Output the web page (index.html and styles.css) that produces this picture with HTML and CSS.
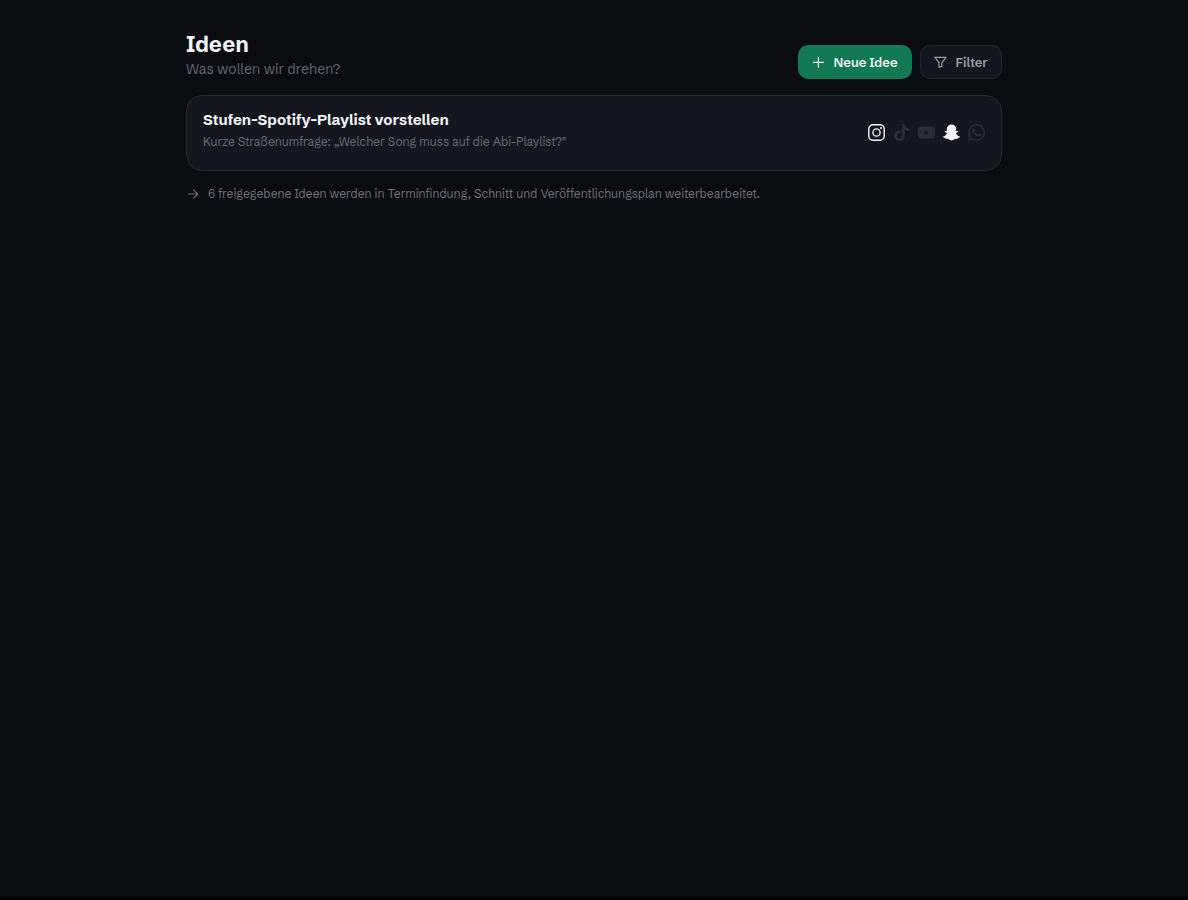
FILE: index.html
```html
<!DOCTYPE html>
<html lang="de">
<head>
  <meta charset="UTF-8" />
  <meta name="viewport" content="width=device-width, initial-scale=1" />
  <title>Ideen</title>
  <link rel="stylesheet" href="styles.css">
</head>
<body>
  <main class="page">
    <header class="page-header">
      <div>
        <h1>Ideen</h1>
        <p class="subtitle">Was wollen wir drehen?</p>
      </div>
      <div class="actions">
        <button type="button" class="btn btn-primary">
          <svg class="icon" viewBox="0 0 24 24" aria-hidden="true"><path d="M11 4v17M2.500 12.500h17" /></svg>
          Neue Idee
        </button>
        <button type="button" class="btn btn-filter">
          <svg class="icon" viewBox="0 0 24 24" aria-hidden="true"><path d="M1.500 4h19l-7 9v6.500l-5 1.500v-8z" /></svg>
          Filter
        </button>
      </div>
    </header>

    <article class="card">
      <div class="card-text">
        <h2>Stufen-Spotify-Playlist vorstellen</h2>
        <p>Kurze Straßenumfrage: „Welcher Song muss auf die Abi-Playlist?"</p>
      </div>
      <div class="channels">
        <svg class="channel channel-line active" viewBox="0 0 24 24" role="img" aria-label="Instagram">
          <rect x="1.100" y="1.100" width="21.800" height="21.800" rx="6" />
          <circle cx="12" cy="12" r="5.100" />
          <circle class="dot" cx="18.400" cy="5.600" r="1.440" />
        </svg>
        <svg class="channel" viewBox="0 0 24 24" role="img" aria-label="TikTok">
          <path d="M12.525.02c1.31-.02 2.61-.01 3.91-.02.08 1.53.63 3.09 1.75 4.17 1.12 1.11 2.7 1.62 4.24 1.79v4.03c-1.44-.05-2.89-.35-4.2-.97-.57-.26-1.1-.59-1.62-.93-.01 2.92.01 5.84-.02 8.75-.08 1.4-.54 2.79-1.35 3.94-1.31 1.92-3.58 3.17-5.91 3.21-1.43.08-2.86-.31-4.08-1.03-2.02-1.19-3.44-3.37-3.65-5.71-.02-.5-.03-1-.01-1.49.18-1.9 1.12-3.72 2.58-4.96 1.66-1.44 3.98-2.13 6.15-1.72.02 1.48-.04 2.96-.04 4.44-.99-.32-2.15-.23-3.02.37-.63.41-1.11 1.04-1.36 1.75-.21.51-.15 1.07-.14 1.61.24 1.64 1.82 3.02 3.5 2.87 1.12-.01 2.19-.66 2.77-1.61.19-.33.4-.67.41-1.06.1-1.79.06-3.57.07-5.36.01-4.03-.01-8.05.02-12.07z" />
        </svg>
        <svg class="channel" viewBox="0 0 24 24" role="img" aria-label="YouTube">
          <path d="M23.498 6.186a3.016 3.016 0 0 0-2.122-2.136C19.505 3.545 12 3.545 12 3.545s-7.505 0-9.377.505A3.017 3.017 0 0 0 .502 6.186C0 8.070 0 12 0 12s0 3.930.502 5.814a3.016 3.016 0 0 0 2.122 2.136c1.871.505 9.376.505 9.376.505s7.505 0 9.377-.505a3.015 3.015 0 0 0 2.122-2.136C24 15.930 24 12 24 12s0-3.930-.502-5.814zM9.545 15.568V8.432L15.818 12l-6.273 3.568z" />
        </svg>
        <svg class="channel active" viewBox="0 0 24 24" role="img" aria-label="Snapchat">
          <path d="M12.206.793c.99 0 4.347.276 5.93 3.821.529 1.193.403 3.219.299 4.847l-.003.06c-.012.18-.022.345-.03.51.075.045.203.09.401.09.3-.016.659-.12 1.033-.301.165-.088.344-.104.464-.104.182 0 .359.029.509.09.45.149.734.479.734.838.015.449-.39.839-1.213 1.168-.089.029-.209.075-.344.119-.45.135-1.139.36-1.333.81-.09.224-.061.524.12.868l.015.015c.06.136 1.526 3.475 4.791 4.014.255.044.435.27.42.509 0 .075-.015.149-.045.225-.24.569-1.273.988-3.146 1.271-.059.091-.12.375-.164.57-.029.179-.074.36-.134.553-.076.271-.27.405-.555.405h-.03c-.135 0-.313-.031-.538-.074-.36-.075-.765-.135-1.273-.135-.3 0-.599.015-.913.074-.6.104-1.123.464-1.723.884-.853.599-1.826 1.288-3.294 1.288-.06 0-.119-.015-.18-.015h-.149c-1.468 0-2.427-.675-3.279-1.288-.599-.42-1.107-.779-1.707-.884-.314-.045-.629-.074-.928-.074-.54 0-.958.089-1.272.149-.211.043-.391.074-.54.074-.374 0-.523-.224-.583-.42-.061-.192-.09-.389-.135-.567-.046-.181-.105-.494-.166-.57-1.918-.222-2.950-.642-3.189-1.226-.031-.063-.052-.15-.055-.225-.015-.243.165-.465.42-.509 3.264-.54 4.730-3.879 4.791-4.020l.016-.029c.18-.345.224-.645.119-.869-.195-.434-.884-.658-1.332-.809-.121-.029-.24-.074-.346-.119-1.107-.435-1.257-.93-1.197-1.273.09-.479.674-.793 1.168-.793.146 0 .27.029.383.074.42.194.789.3 1.104.3.234 0 .384-.06.465-.105l-.046-.569c-.098-1.626-.225-3.651.307-4.837C7.392 1.077 10.739.807 11.727.807l.419-.015h.06z" />
        </svg>
        <svg class="channel" viewBox="0 0 24 24" role="img" aria-label="WhatsApp">
          <path d="M17.472 14.382c-.297-.149-1.758-.867-2.030-.967-.273-.099-.471-.148-.67.15-.197.297-.767.966-.94 1.164-.173.199-.347.223-.644.075-.297-.15-1.255-.463-2.390-1.475-.883-.788-1.480-1.761-1.653-2.059-.173-.297-.018-.458.13-.606.134-.133.298-.347.446-.52.149-.174.198-.298.298-.497.099-.198.05-.371-.025-.52-.075-.149-.669-1.612-.916-2.207-.242-.579-.487-.5-.669-.51-.173-.008-.371-.01-.57-.01-.198 0-.52.074-.792.372-.272.297-1.040 1.016-1.040 2.479 0 1.462 1.065 2.875 1.213 3.074.149.198 2.096 3.200 5.077 4.487.709.306 1.262.489 1.694.625.712.227 1.360.195 1.871.118.571-.085 1.758-.719 2.006-1.413.248-.694.248-1.289.173-1.413-.074-.124-.272-.198-.57-.347m-5.421 7.403h-.004a9.870 9.870 0 0 1-5.031-1.378l-.361-.214-3.741.982.998-3.648-.235-.374a9.860 9.860 0 0 1-1.510-5.260c.001-5.450 4.436-9.884 9.888-9.884 2.640 0 5.122 1.030 6.988 2.898a9.825 9.825 0 0 1 2.893 6.994c-.003 5.450-4.437 9.884-9.885 9.884m8.413-18.297A11.815 11.815 0 0 0 12.050 0C5.495 0 .160 5.335.157 11.892c0 2.096.547 4.142 1.588 5.945L.057 24l6.305-1.654a11.882 11.882 0 0 0 5.683 1.448h.005c6.554 0 11.890-5.335 11.893-11.893a11.821 11.821 0 0 0-3.480-8.413z" />
        </svg>
      </div>
    </article>

    <p class="hint">
      <svg class="icon" viewBox="0 0 24 24" aria-hidden="true"><path d="M4 12h16M13 5l7 7-7 7" /></svg>
      6 freigegebene Ideen werden in Terminfindung, Schnitt und Veröffentlichungsplan weiterbearbeitet.
    </p>
  </main>
</body>
</html>
```
FILE: styles.css
```css
* {
  box-sizing: border-box;
  margin: 0;
  padding: 0;
}

html {
  background: #030305;
}

body {
  font-family: 'Schibsted Grotesk', 'Liberation Sans', Arial, sans-serif;
  color: #f1f3f6;
}

.page {
  max-width: 848px;
  min-height: calc(100vh - 3px);
  margin: 0 auto;
  padding: 32px 16px;
  background: #0a0c10;
  box-shadow: 0 0 0 100vmax #0a0c10;
  clip-path: inset(0 -100vmax);
}

.page-header {
  display: flex;
  justify-content: space-between;
  align-items: flex-end;
  margin-bottom: 16px;
}

h1 {
  font-size: 22px;
  line-height: 26px;
}

.subtitle {
  margin-top: 1px;
  font-size: 14px;
  line-height: 20px;
  color: #5f646d;
}

.actions {
  display: flex;
  gap: 8px;
}

.btn {
  display: flex;
  align-items: center;
  gap: 8px;
  height: 34px;
  padding: 0 13px;
  border: 1px solid transparent;
  border-radius: 10px;
  font-family: inherit;
  font-size: 13px;
  font-weight: 600;
  cursor: pointer;
}

.btn-primary {
  background: #117a55;
  color: #f1f3f6;
}

.btn-filter {
  background: #14171d;
  border-color: #24272d;
  color: #989da6;
}

.icon {
  flex: none;
  width: 14px;
  height: 14px;
  fill: none;
  stroke: currentColor;
  stroke-width: 2;
  stroke-linecap: round;
  stroke-linejoin: round;
}

.card {
  display: flex;
  justify-content: space-between;
  gap: 16px;
  min-height: 76px;
  padding: 12px 16px;
  border: 1px solid #25292e;
  border-radius: 16px;
  background: #14171c;
}

.card h2 {
  font-size: 15px;
  line-height: 23px;
}

.card p {
  font-size: 12px;
  line-height: 21px;
  color: #646972;
}

.channels {
  display: flex;
  align-items: center;
  gap: 8px;
  height: 48px;
}

.channel {
  width: 17px;
  height: 17px;
  fill: #2b2e34;
}

.channel.active {
  fill: #f1f3f6;
}

.channel-line.active {
  fill: none;
  stroke: #f1f3f6;
  stroke-width: 2;
}

.channel-line .dot {
  fill: #f1f3f6;
  stroke: none;
}

.hint {
  display: flex;
  align-items: center;
  gap: 8px;
  margin-top: 13px;
  font-size: 12px;
  line-height: 20px;
  color: #6b7079;
}
```
